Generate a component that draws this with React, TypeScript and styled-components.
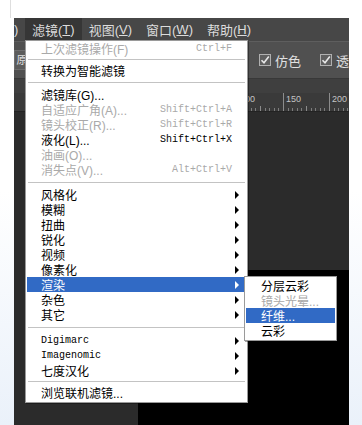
import React from "react";
import styled, { createGlobalStyle } from "styled-components";

const GlobalStyle = createGlobalStyle`
  html, body {
    margin: 0;
    padding: 0;
  }
  body {
    width: 362px;
    height: 425px;
    overflow: hidden;
    font-family: "Liberation Sans", "Noto Sans CJK SC", sans-serif;
    background: linear-gradient(#ffffff 45%, #eaf1fa 100%);
  }
`;

const Page = styled.div`
  width: 362px;
  height: 425px;
  box-sizing: border-box;
  padding: 18px 13px 0 14px;
  background: linear-gradient(90deg, transparent 10px, #dedede 10px, #dedede 11px, transparent 11px) 0 0 / 100% 18px no-repeat;
`;

const Window = styled.div`
  width: 335px;
  height: 407px;
  background: #2b2b2b;
  overflow: hidden;
  display: flex;
  flex-direction: column;
`;

const MenuBar = styled.div`
  height: 23px;
  flex: none;
  display: flex;
  align-items: stretch;
  background: #474747;
  color: #dcdcdc;
  font-size: 13px;
`;

const MenuStub = styled.div`
  width: 11px;
  display: flex;
  align-items: center;
`;

const TopItem = styled.div<{ $active?: boolean }>`
  display: flex;
  align-items: center;
  padding: 0 7px;
  background: ${(p) => (p.$active ? "#363636" : "transparent")};
  white-space: nowrap;
`;

const Workspace = styled.div`
  position: relative;
  flex: 1;
  display: flex;
  flex-direction: column;
`;

const OptionsBar = styled.div`
  height: 38px;
  flex: none;
  box-sizing: border-box;
  display: flex;
  align-items: center;
  background: #505050;
  border-top: 1px solid #5e5e5e;
  border-bottom: 1px solid #383838;
  color: #e0e0e0;
  font-size: 13px;
`;

const OptButton = styled.div`
  width: 20px;
  height: 20px;
  box-sizing: border-box;
  border: 1px solid #6e6e6e;
  background: #5c5c5c;
  font-size: 11px;
  line-height: 18px;
  text-align: center;
`;

const CheckGroup = styled.div`
  margin-left: 229px;
  display: flex;
  align-items: center;
  gap: 19px;
  white-space: nowrap;
`;

const CheckItem = styled.label`
  display: flex;
  align-items: center;
  gap: 4px;
`;

const Box = styled.span`
  width: 12px;
  height: 12px;
  box-sizing: border-box;
  border: 1px solid #b0b0b0;
  background: #5f5f5f;
  display: flex;
`;

const TabBand = styled.div`
  height: 14px;
  flex: none;
  background: #3f3f3f;
`;

const Ruler = styled.div`
  height: 19px;
  flex: none;
  box-sizing: border-box;
  display: flex;
  padding-left: 39px;
  background: #3a3a3a;
  border-bottom: 1px solid #222;
`;

const RulerMark = styled.div`
  width: 46px;
  flex: none;
  box-sizing: border-box;
  border-left: 1px solid #8c8c8c;
  padding-left: 2px;
  font-size: 9px;
  line-height: 12px;
  color: #c4c4c4;
  background:
    linear-gradient(90deg, transparent 22px, #8c8c8c 22px, #8c8c8c 23px, transparent 23px) 0 100% / 100% 5px no-repeat,
    repeating-linear-gradient(90deg, transparent 0 3.6px, #7c7c7c 3.6px 4.6px) 0 100% / 100% 3px no-repeat;
`;

const CanvasArea = styled.div`
  flex: 1;
  display: flex;
  flex-direction: column;
  padding: 158px 0 0 124px;
  background: #2b2b2b;
`;

const ImageBlock = styled.div`
  flex: 1;
  background: #000;
`;

const Dropdown = styled.div`
  position: absolute;
  top: -1px;
  left: 11px;
  width: 223px;
  box-sizing: border-box;
  padding: 0 1px 2px;
  background: #fff;
  border: 1px solid #9a9a9a;
  box-shadow: 1px 1px 0 rgba(0, 0, 0, 0.35);
  font-size: 12px;
  color: #000;
`;

const Row = styled.div<{ $dis?: boolean; $hi?: boolean }>`
  position: relative;
  height: 15px;
  display: flex;
  align-items: center;
  justify-content: space-between;
  padding: 0 14px;
  white-space: nowrap;
  color: ${(p) => (p.$hi ? "#fff" : p.$dis ? "#a9a9a9" : "#000")};
  background: ${(p) => (p.$hi ? "#316ac5" : "transparent")};
`;

const Label = styled.span<{ $mono?: boolean }>`
  font-family: ${(p) =>
    p.$mono ? '"Liberation Mono", monospace' : '"Liberation Sans", "Noto Sans CJK SC", sans-serif'};
  font-size: ${(p) => (p.$mono ? "10px" : "12px")};
`;

const Shortcut = styled.span`
  font-family: "Liberation Mono", monospace;
  font-size: 10px;
`;

const Arrow = styled.span`
  margin-right: -7px;
  width: 0;
  height: 0;
  border-left: 4px solid currentColor;
  border-top: 4px solid transparent;
  border-bottom: 4px solid transparent;
`;

const Separator = styled.div<{ $h: number }>`
  height: ${(p) => p.$h}px;
  display: flex;
  align-items: center;
  margin: 0 1px;
  &::before {
    content: "";
    flex: 1;
    height: 1px;
    background: #c3c3c3;
  }
`;

const SubMenu = styled.div`
  position: absolute;
  top: -1px;
  left: calc(100% - 2px);
  width: 93px;
  box-sizing: border-box;
  padding: 1px 1px 2px;
  background: #fff;
  border: 1px solid #9a9a9a;
  box-shadow: 1px 1px 0 rgba(0, 0, 0, 0.35);
`;

const SubRow = styled.div<{ $dis?: boolean; $hi?: boolean }>`
  height: 15px;
  display: flex;
  align-items: center;
  padding-left: 15px;
  white-space: nowrap;
  color: ${(p) => (p.$hi ? "#fff" : p.$dis ? "#a9a9a9" : "#000")};
  background: ${(p) => (p.$hi ? "#316ac5" : "transparent")};
`;

type Entry =
  | { sep: number }
  | { label: string; keys?: string; dis?: boolean; sub?: boolean; hi?: boolean; mono?: boolean };

const entries: Entry[] = [
  { label: "上次滤镜操作(F)", keys: "Ctrl+F", dis: true },
  { sep: 7 },
  { label: "转换为智能滤镜" },
  { sep: 9 },
  { label: "滤镜库(G)..." },
  { label: "自适应广角(A)...", keys: "Shift+Ctrl+A", dis: true },
  { label: "镜头校正(R)...", keys: "Shift+Ctrl+R", dis: true },
  { label: "液化(L)...", keys: "Shift+Ctrl+X" },
  { label: "油画(O)...", dis: true },
  { label: "消失点(V)...", keys: "Alt+Ctrl+V", dis: true },
  { sep: 10 },
  { label: "风格化", sub: true },
  { label: "模糊", sub: true },
  { label: "扭曲", sub: true },
  { label: "锐化", sub: true },
  { label: "视频", sub: true },
  { label: "像素化", sub: true },
  { label: "渲染", sub: true, hi: true },
  { label: "杂色", sub: true },
  { label: "其它", sub: true },
  { sep: 11 },
  { label: "Digimarc", sub: true, mono: true },
  { label: "Imagenomic", sub: true, mono: true },
  { label: "七度汉化", sub: true },
  { sep: 7 },
  { label: "浏览联机滤镜..." },
];

const renderItems = [
  { label: "分层云彩" },
  { label: "镜头光晕...", dis: true },
  { label: "纤维...", hi: true },
  { label: "云彩" },
];

// only the last three marks show beside the menu
const rulerMarks = ["", "", "", "", "100", "150", "200"];

const CheckIcon = () => (
  <svg width="10" height="10" viewBox="0 0 10 10">
    <path d="M1.5 5.2 L4 7.8 L8.8 1.5" fill="none" stroke="#e8e8e8" strokeWidth="1.6" />
  </svg>
);

export default function App() {
  return (
    <>
      <GlobalStyle />
      <Page>
        <Window>
          <MenuBar>
            <MenuStub>)</MenuStub>
            <TopItem $active>
              滤镜(<u>T</u>)
            </TopItem>
            <TopItem>
              视图(<u>V</u>)
            </TopItem>
            <TopItem>
              窗口(<u>W</u>)
            </TopItem>
            <TopItem>
              帮助(<u>H</u>)
            </TopItem>
          </MenuBar>
          <Workspace>
            <OptionsBar>
              <OptButton>原</OptButton>
              <CheckGroup>
                <CheckItem>
                  <Box>
                    <CheckIcon />
                  </Box>
                  仿色
                </CheckItem>
                <CheckItem>
                  <Box>
                    <CheckIcon />
                  </Box>
                  透
                </CheckItem>
              </CheckGroup>
            </OptionsBar>
            <TabBand />
            <Ruler>
              {rulerMarks.map((n, i) => (
                <RulerMark key={i}>{n}</RulerMark>
              ))}
            </Ruler>
            <CanvasArea>
              <ImageBlock />
            </CanvasArea>

            <Dropdown>
              {entries.map((e, i) =>
                "sep" in e ? (
                  <Separator key={i} $h={e.sep} />
                ) : (
                  <Row key={i} $dis={e.dis} $hi={e.hi}>
                    <Label $mono={e.mono}>{e.label}</Label>
                    {e.keys && <Shortcut>{e.keys}</Shortcut>}
                    {e.sub && <Arrow />}
                    {e.hi && (
                      <SubMenu>
                        {renderItems.map((s) => (
                          <SubRow key={s.label} $dis={s.dis} $hi={s.hi}>
                            <Label>{s.label}</Label>
                          </SubRow>
                        ))}
                      </SubMenu>
                    )}
                  </Row>
                )
              )}
            </Dropdown>
          </Workspace>
        </Window>
      </Page>
    </>
  );
}
